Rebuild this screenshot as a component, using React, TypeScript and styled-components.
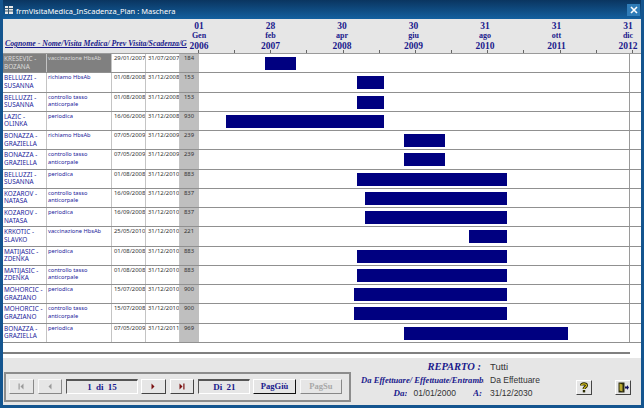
import React from 'react';
import styled, { createGlobalStyle } from 'styled-components';

const GlobalStyle = createGlobalStyle`
  html, body {
    margin: 0;
    padding: 0;
    overflow: hidden;
    background: #e6e6e6;
  }
`;

const SERIF = '"Liberation Serif", "Times New Roman", serif';
const TAHOMA = '"Noto Sans", Verdana, sans-serif';
const ARIAL = '"Liberation Sans", Arial, sans-serif';

const NAVY = '#1a1a8c';
const AXIS_START = Date.UTC(2006, 0, 1);
const AXIS_END = Date.UTC(2012, 11, 31);

const ScWindow = styled.div`
  width: 644px;
  height: 408px;
  box-sizing: border-box;
  display: flex;
  flex-direction: column;
  border: solid #14558f;
  border-width: 0 3px 3px 3px;
  background: #e6e6e6;
  overflow: hidden;
`;

const ScTitleBar = styled.div`
  height: 19px;
  flex: none;
  margin: 0 -3px;
  padding: 0 4px 0 5px;
  display: flex;
  align-items: center;
  gap: 3px;
  background: linear-gradient(#0a3560, #14609f);
  color: #fff;
  font: 7.5px ${TAHOMA};
`;

const ScTitle = styled.span`
  flex: 1;
  padding-top: 3px;
`;

const ScCloseButton = styled.div`
  width: 13px;
  height: 12px;
  margin-top: 1px;
  display: flex;
  align-items: center;
  justify-content: center;
  background: #2f7cb8;
`;

const ScHeader = styled.div`
  height: 35px;
  flex: none;
  display: flex;
  flex-direction: column;
  background: #e6e6e6;
  border-bottom: 1px solid #9a9a9a;
  box-sizing: border-box;
`;

const ScHeaderTop = styled.div`
  flex: 1;
  display: flex;
  min-height: 0;
`;

const ScColumnsTitle = styled.div`
  width: 184px;
  flex: none;
  overflow: hidden;
  white-space: nowrap;
  padding: 20px 0 0 2px;
  box-sizing: border-box;
  font: italic bold 7.8px ${SERIF};
  color: ${NAVY};
  text-decoration: underline;
`;

const ScAxisLabels = styled.div`
  flex: 1;
  padding-right: 1px;
  display: flex;
  justify-content: space-between;
`;

const ScAxisLabel = styled.div`
  width: 24px;
  padding-top: 2px;
  display: flex;
  flex-direction: column;
  align-items: center;
  font: bold 9.5px/10px ${SERIF};
  color: ${NAVY};
`;

const ScAxisMonth = styled.span`
  font-size: 8px;
`;

const ScTicks = styled.div`
  height: 3px;
  flex: none;
  margin: 0 8px 0 195px;
  display: flex;
  justify-content: space-between;
`;

const ScTick = styled.i`
  width: 1px;
  background: #666;
`;

const ScTable = styled.div`
  flex: none;
  background: #fff;
`;

const ScRow = styled.div`
  height: 19.25px;
  box-sizing: border-box;
  display: grid;
  grid-template-columns: 44px 65px 34px 34px 19px 431px;
  border-bottom: 1px solid #909090;
  overflow: hidden;
`;

const ScCell = styled.div<{ $selected?: boolean }>`
  box-sizing: border-box;
  padding: 1px 0 0 1px;
  border-right: 1px solid #c4c4c4;
  font: 6.4px/7.5px ${TAHOMA};
  color: ${(p) => (p.$selected ? '#dcdcdc' : '#22229a')};
  background: ${(p) => (p.$selected ? '#808080' : '#fff')};
  overflow: hidden;
`;

const ScVisitCell = styled(ScCell)`
  font-size: 5.7px;
`;

const ScDateCell = styled(ScCell)`
  color: #333;
  padding-left: 2px;
  font-size: 5.9px;
  white-space: nowrap;
`;

const ScCountCell = styled(ScCell)`
  color: #333;
  background: #bfbfbf;
  border-right: 0;
  padding-left: 4px;
  font-size: 5.9px;
`;

const ScChartCell = styled.div`
  box-sizing: border-box;
  padding-top: 3px;
  border-right: 1px solid #9a9a9a;
`;

const ScBar = styled.div`
  height: 13px;
  background: #000080;
`;

const ScTableEnd = styled.div`
  height: 15px;
  flex: none;
  background: #fff;
  padding-top: 9px;
  box-sizing: border-box;
`;

const ScTableEndLine = styled.div`
  width: 627px;
  height: 2px;
  background: #808080;
`;

const ScFooter = styled.div`
  flex: 1;
  display: flex;
  align-items: flex-start;
`;

const ScNavigator = styled.div`
  width: 347px;
  height: 30px;
  margin: 14px 0 0 1px;
  box-sizing: border-box;
  border: 2px solid #8c8c8c;
  padding: 5px 3px 0 3px;
  display: flex;
  align-items: flex-start;
  flex: none;
`;

const ScNavButton = styled.div<{ $width?: number; $gap?: number; $strong?: boolean; $disabled?: boolean }>`
  width: ${(p) => p.$width ?? 25}px;
  height: 15px;
  margin-right: ${(p) => p.$gap ?? 4}px;
  box-sizing: border-box;
  display: flex;
  align-items: center;
  justify-content: center;
  background: #e6e6e6;
  border: 1px solid;
  border-color: ${(p) => (p.$strong ? '#fff #111 #111 #fff' : p.$disabled ? '#f8f8f8 #888 #888 #f8f8f8' : '#fff #444 #444 #fff')};
  font: bold 8.5px ${SERIF};
  color: ${(p) => (p.$disabled ? '#a8a8a8' : NAVY)};
`;

const ScCounter = styled.div<{ $width: number; $gap?: number }>`
  width: ${(p) => p.$width}px;
  height: 15px;
  margin-right: ${(p) => p.$gap ?? 3}px;
  box-sizing: border-box;
  border: 1px solid;
  border-color: #555 #fff #fff #555;
  border-top-width: 2px;
  display: flex;
  align-items: center;
  justify-content: center;
  font: bold 9px ${SERIF};
  color: ${NAVY};
  word-spacing: 2px;
`;

const ScInfo = styled.div`
  width: 189px;
  flex: none;
  margin: 1.5px 0 0 10px;
  display: grid;
  grid-template-columns: 123px 1fr;
  grid-auto-rows: 13.5px;
  column-gap: 6px;
  align-items: center;
`;

const ScInfoLabel = styled.div<{ $size: number; $inset?: number }>`
  font: italic bold ${(p) => p.$size}px ${SERIF};
  color: ${NAVY};
  text-align: right;
  white-space: nowrap;
  overflow: hidden;
  padding-right: ${(p) => p.$inset ?? 0}px;
`;

const ScInfoValue = styled.div<{ $size: number }>`
  font: ${(p) => p.$size}px ${ARIAL};
  color: #333;
  white-space: nowrap;
`;

const ScRange = styled.div`
  display: flex;
  justify-content: flex-end;
  align-items: center;
  gap: 6px;
`;

const ScRangeTo = styled.span`
  margin-left: 11px;
`;

const ScActions = styled.div`
  flex: 1;
  display: flex;
  gap: 23px;
  margin: 22px 0 0 26px;
`;

const ScIconButton = styled.div`
  width: 16px;
  height: 15px;
  box-sizing: border-box;
  display: flex;
  align-items: center;
  justify-content: center;
  background: #e6e6e6;
  border: 1px solid;
  border-color: #fff #444 #444 #fff;
`;

const rows = [
  ['KRESEVIC - BOZANA', 'vaccinazione HbsAb', '29/01/2007', '31/07/2007', '184'],
  ['BELLUZZI - SUSANNA', 'richiamo HbsAb', '01/08/2008', '31/12/2008', '153'],
  ['BELLUZZI - SUSANNA', 'controllo tasso anticorpale', '01/08/2008', '31/12/2008', '153'],
  ['LAZIC - OLINKA', 'periodica', '16/06/2006', '31/12/2008', '930'],
  ['BONAZZA - GRAZIELLA', 'richiamo HbsAb', '07/05/2009', '31/12/2009', '239'],
  ['BONAZZA - GRAZIELLA', 'controllo tasso anticorpale', '07/05/2009', '31/12/2009', '239'],
  ['BELLUZZI - SUSANNA', 'periodica', '01/08/2008', '31/12/2010', '883'],
  ['KOZAROV - NATASA', 'controllo tasso anticorpale', '16/09/2008', '31/12/2010', '837'],
  ['KOZAROV - NATASA', 'periodica', '16/09/2008', '31/12/2010', '837'],
  ['KRKOTIC - SLAVKO', 'vaccinazione HbsAb', '25/05/2010', '31/12/2010', '221'],
  ['MATIJASIC - ZDENKA', 'periodica', '01/08/2008', '31/12/2010', '883'],
  ['MATIJASIC - ZDENKA', 'controllo tasso anticorpale', '01/08/2008', '31/12/2010', '883'],
  ['MOHORCIC - GRAZIANO', 'periodica', '15/07/2008', '31/12/2010', '900'],
  ['MOHORCIC - GRAZIANO', 'controllo tasso anticorpale', '15/07/2008', '31/12/2010', '900'],
  ['BONAZZA - GRAZIELLA', 'periodica', '07/05/2009', '31/12/2011', '969']
];

const axisLabels = [
  ['01', 'Gen', '2006'],
  ['28', 'feb', '2007'],
  ['30', 'apr', '2008'],
  ['30', 'giu', '2009'],
  ['31', 'ago', '2010'],
  ['31', 'ott', '2011'],
  ['31', 'dic', '2012']
];

function toPercent(date: string): number {
  const [d, m, y] = date.split('/').map(Number);
  return ((Date.UTC(y, m - 1, d) - AXIS_START) / (AXIS_END - AXIS_START)) * 100;
}

function NavIcon({ kind, color }: { kind: 'first' | 'prev' | 'next' | 'last'; color: string }) {
  return <svg width="7" height="7" viewBox="0 0 7 7" fill={color}>
    {kind === 'first' && <rect x="0.5" y="0.5" width="1.2" height="6" />}
    {kind === 'last' && <rect x="5.3" y="0.5" width="1.2" height="6" />}
    {kind === 'first' || kind === 'prev' ? <path d="M5.5 0.5v6l-3-3z" /> : <path d="M1.5 0.5v6l3-3z" />}
  </svg>;
}

export default function App(): JSX.Element {
  return <>
    <GlobalStyle />
    <ScWindow>
      <ScTitleBar>
        <svg width="8" height="8" viewBox="0 0 8 8">
          <rect width="8" height="8" fill="#e8e8e8" />
          <path d="M0 2.5h8M0 5h8M3.5 0v8" stroke="#33566f" strokeWidth="1" />
        </svg>
        <ScTitle>frmVisitaMedica_InScadenza_Plan : Maschera</ScTitle>
        <ScCloseButton>
          <svg width="8" height="8" viewBox="0 0 8 8">
            <path d="M1 1l6 6M7 1l-6 6" stroke="#fff" strokeWidth="1.6" />
          </svg>
        </ScCloseButton>
      </ScTitleBar>
      <ScHeader>
        <ScHeaderTop>
          <ScColumnsTitle>Cognome - Nome/Visita Medica/ Prev Visita/Scadenza/GG</ScColumnsTitle>
          <ScAxisLabels>
            {axisLabels.map(([day, month, year]) => <ScAxisLabel key={year}>
              <span>{day}</span>
              <ScAxisMonth>{month}</ScAxisMonth>
              <span>{year}</span>
            </ScAxisLabel>)}
          </ScAxisLabels>
        </ScHeaderTop>
        <ScTicks>
          {Array.from({ length: 13 }, (_, i) => <ScTick key={i} />)}
        </ScTicks>
      </ScHeader>
      <ScTable>
        {rows.map(([name, visit, from, to, days], i) => <ScRow key={i}>
          <ScCell $selected={i === 0}>{name}</ScCell>
          <ScVisitCell $selected={i === 0}>{visit}</ScVisitCell>
          <ScDateCell>{from}</ScDateCell>
          <ScDateCell>{to}</ScDateCell>
          <ScCountCell>{days}</ScCountCell>
          <ScChartCell>
            <ScBar style={{
              marginLeft: `calc(${toPercent(from)}% - 0.5px)`,
              width: `calc(${toPercent(to) - toPercent(from)}% + 1px)`
            }} />
          </ScChartCell>
        </ScRow>)}
      </ScTable>
      <ScTableEnd>
        <ScTableEndLine />
      </ScTableEnd>
      <ScFooter>
        <ScNavigator>
          <ScNavButton $disabled><NavIcon kind="first" color="#999" /></ScNavButton>
          <ScNavButton $disabled><NavIcon kind="prev" color="#999" /></ScNavButton>
          <ScCounter $width={73}>1 di 15</ScCounter>
          <ScNavButton><NavIcon kind="next" color="#7a1010" /></ScNavButton>
          <ScNavButton $gap={4}><NavIcon kind="last" color="#7a1010" /></ScNavButton>
          <ScCounter $width={53}>Di 21</ScCounter>
          <ScNavButton $width={43} $strong>PagGiù</ScNavButton>
          <ScNavButton $width={43} $disabled>PagSu</ScNavButton>
        </ScNavigator>
        <ScInfo>
          <ScInfoLabel $size={10.5} $inset={3}>REPARTO :</ScInfoLabel>
          <ScInfoValue $size={9.5}>Tutti</ScInfoValue>
          <ScInfoLabel $size={8.6}>Da Effettuare/ Effettuate/Entrambi</ScInfoLabel>
          <ScInfoValue $size={8.5}>Da Effettuare</ScInfoValue>
          <ScRange>
            <ScInfoLabel $size={9}>Da:</ScInfoLabel>
            <ScInfoValue $size={8.5}>01/01/2000</ScInfoValue>
            <ScRangeTo><ScInfoLabel $size={9} $inset={2}>A:</ScInfoLabel></ScRangeTo>
          </ScRange>
          <ScInfoValue $size={8.5}>31/12/2030</ScInfoValue>
        </ScInfo>
        <ScActions>
          <ScIconButton>
            <svg width="10" height="11" viewBox="0 0 10 11">
              <path d="M2.5 3.5C2.5 1.5 7.5 1 7.5 3.5 7.5 5 5 5 5 7" fill="none" stroke="#2a2a00" strokeWidth="3" />
              <path d="M2.5 3.5C2.5 1.5 7.5 1 7.5 3.5 7.5 5 5 5 5 7" fill="none" stroke="#d8c020" strokeWidth="1.2" />
              <rect x="3.8" y="8" width="2.4" height="2.4" fill="#2a2a00" />
            </svg>
          </ScIconButton>
          <ScIconButton>
            <svg width="11" height="11" viewBox="0 0 11 11">
              <path d="M0.5 0.5h6v10h-6z" fill="#2a2a10" />
              <path d="M1.5 1.5l3 1v7l-3-1z" fill="#b8a830" />
              <path d="M7 4.5h2V3l2 2.5-2 2.5V6.5H7z" fill="#101060" />
            </svg>
          </ScIconButton>
        </ScActions>
      </ScFooter>
    </ScWindow>
  </>;
}
